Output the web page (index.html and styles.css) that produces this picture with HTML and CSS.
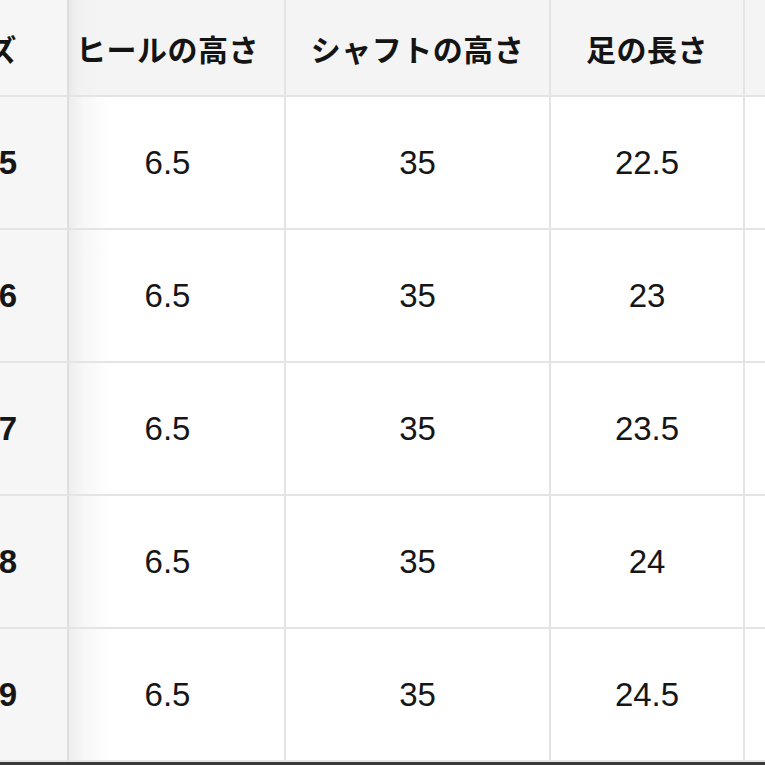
FILE: index.html
```html
<!DOCTYPE html>
<html lang="ja">
<head>
<meta charset="utf-8">
<link rel="stylesheet" href="styles.css">
</head>
<body>
<div class="frame">
  <div class="grid">
    <div class="cell head first">サイズ</div>
    <div class="cell head c2">ヒールの高さ</div>
    <div class="cell head">シャフトの高さ</div>
    <div class="cell head">足の長さ</div>
    <div class="cell head last"></div>

    <div class="cell first num">35</div>
    <div class="cell c2">6.5</div>
    <div class="cell">35</div>
    <div class="cell">22.5</div>
    <div class="cell last"></div>

    <div class="cell first num">36</div>
    <div class="cell c2">6.5</div>
    <div class="cell">35</div>
    <div class="cell">23</div>
    <div class="cell last"></div>

    <div class="cell first num">37</div>
    <div class="cell c2">6.5</div>
    <div class="cell">35</div>
    <div class="cell">23.5</div>
    <div class="cell last"></div>

    <div class="cell first num">38</div>
    <div class="cell c2">6.5</div>
    <div class="cell">35</div>
    <div class="cell">24</div>
    <div class="cell last"></div>

    <div class="cell first num">39</div>
    <div class="cell c2">6.5</div>
    <div class="cell">35</div>
    <div class="cell">24.5</div>
    <div class="cell last"></div>
  </div>
  <div class="bottom-bar"></div>
</div>
</body>
</html>
```

FILE: styles.css
```css
html, body {
  margin: 0;
  padding: 0;
  background: #ffffff;
  overflow: hidden;
}

.frame {
  width: 765px;
  height: 765px;
  overflow: hidden;
  display: flex;
  flex-direction: column;
}

.grid {
  display: grid;
  grid-template-columns: 69px 217px 265px 194px 220px;
  grid-template-rows: 97px repeat(5, 133px);
  width: 965px;
}

.cell {
  box-sizing: border-box;
  border-right: 2px solid #e4e4e4;
  border-bottom: 2px solid #e4e4e4;
  display: flex;
  align-items: center;
  justify-content: center;
  font-family: "Liberation Sans", Arial, sans-serif;
  font-size: 33px;
  color: #161616;
  white-space: nowrap;
  background: #ffffff;
}

.head {
  background: #f4f4f4;
  font-family: "Noto Sans CJK JP", "Noto Sans", sans-serif;
  font-weight: 700;
  font-size: 30px;
  color: #141414;
  letter-spacing: 0.5px;
}

.first {
  justify-content: flex-end;
  padding-right: 50px;
  background: #f6f6f6;
  border-right-color: #dedede;
}

.num {
  font-weight: 700;
}

.c2 {
  padding-right: 18px;
  background: linear-gradient(to right, #ededed 0px, #f7f7f7 14px, #ffffff 45px);
}

.head.c2 {
  background: linear-gradient(to right, #e9e9e9 0px, #f2f2f2 10px, #f4f4f4 30px);
}

.bottom-bar {
  height: 3px;
  background: #3a3a3a;
}
```
